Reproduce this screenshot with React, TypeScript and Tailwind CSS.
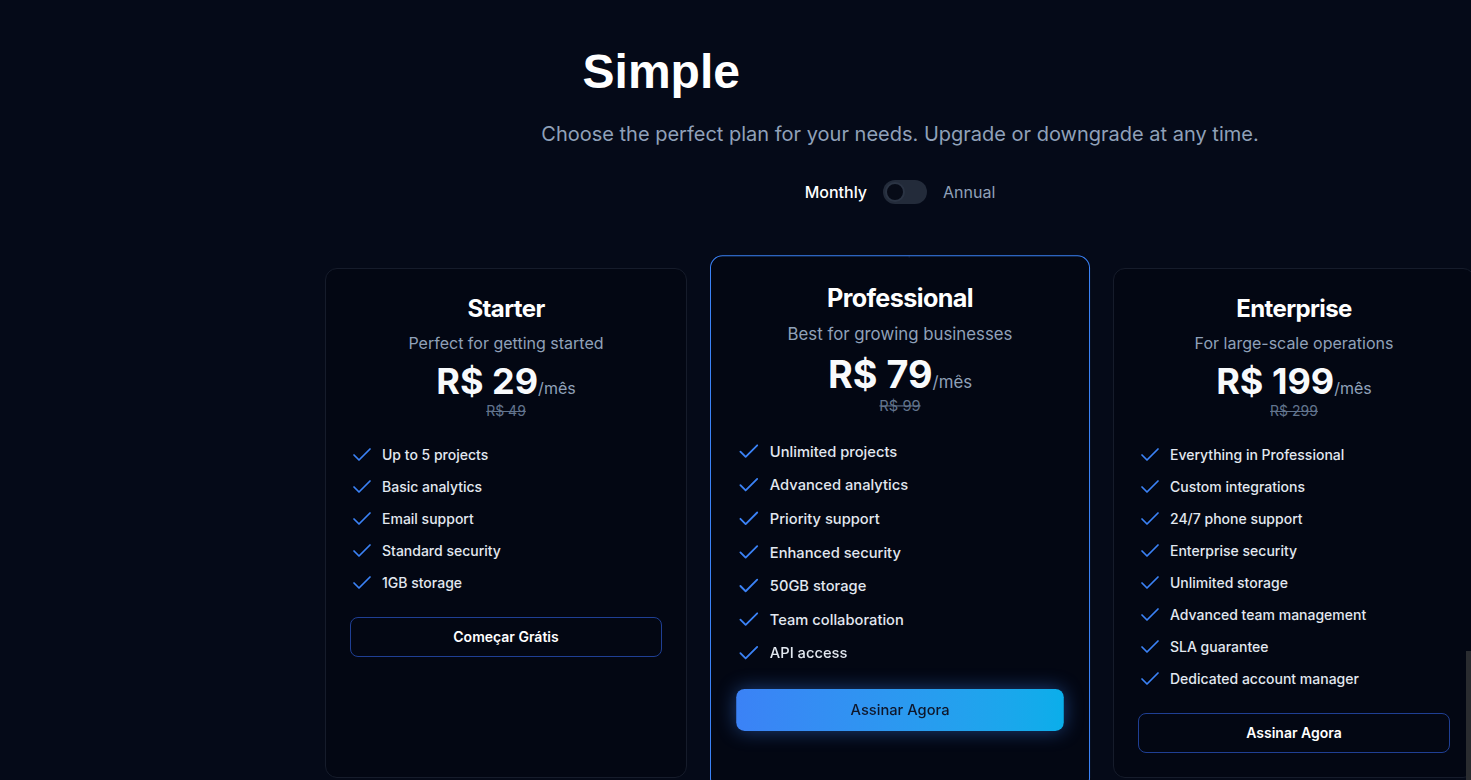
import React, { useState } from 'react';
import { Check } from 'lucide-react';

interface Plan {
  name: string;
  description: string;
  price: string;
  oldPrice: string;
  features: string[];
  cta: string;
  popular?: boolean;
}

const plans: Plan[] = [
  {
    name: 'Starter',
    description: 'Perfect for getting started',
    price: 'R$ 29',
    oldPrice: 'R$ 49',
    features: ['Up to 5 projects', 'Basic analytics', 'Email support', 'Standard security', '1GB storage'],
    cta: 'Começar Grátis'
  },
  {
    name: 'Professional',
    description: 'Best for growing businesses',
    price: 'R$ 79',
    oldPrice: 'R$ 99',
    features: [
      'Unlimited projects',
      'Advanced analytics',
      'Priority support',
      'Enhanced security',
      '50GB storage',
      'Team collaboration',
      'API access'
    ],
    cta: 'Assinar Agora',
    popular: true
  },
  {
    name: 'Enterprise',
    description: 'For large-scale operations',
    price: 'R$ 199',
    oldPrice: 'R$ 299',
    features: [
      'Everything in Professional',
      'Custom integrations',
      '24/7 phone support',
      'Enterprise security',
      'Unlimited storage',
      'Advanced team management',
      'SLA guarantee',
      'Dedicated account manager'
    ],
    cta: 'Assinar Agora'
  }
];

const PlanCard: React.FC<{ plan: Plan }> = ({ plan }) => {
  return (
    <div
      className={
        plan.popular
          ? 'relative z-10 flex scale-105 flex-col overflow-hidden rounded-xl border border-[#3b82f6] bg-[#030713] p-6'
          : 'relative flex flex-col rounded-xl border border-[#161c2b] bg-[#030713] p-6'
      }
    >
      {plan.popular && (
        <span className="absolute -top-3 left-1/2 h-[14px] -translate-x-1/2 whitespace-nowrap text-[11px] font-semibold leading-[14px] text-[#1b2f5c]">
          Mais Popular
        </span>
      )}

      <div className="text-center">
        <h3 className="mb-1.5 text-2xl font-bold tracking-tight text-white">{plan.name}</h3>
        <p className="mb-1.5 text-base text-slate-400">{plan.description}</p>
        <div className="flex items-baseline justify-center">
          <span className="text-4xl font-bold text-slate-50">{plan.price}</span>
          <span className="text-base text-slate-400">/mês</span>
        </div>
        <p className="text-sm text-slate-500 line-through">{plan.oldPrice}</p>
      </div>

      <ul className="mt-[22px] flex flex-col gap-2">
        {plan.features.map((feature) => (
          <li key={feature} className="flex items-center gap-2 text-sm font-medium text-slate-200">
            <Check className="h-6 w-6 shrink-0 text-[#3b82f6]" strokeWidth={1.75} />
            <span>{feature}</span>
          </li>
        ))}
      </ul>

      {plan.popular ? (
        <button className="mt-[22px] h-10 w-full rounded-lg bg-linear-to-r from-[#3b82f6] to-[#0aaeea] text-sm font-medium text-slate-900 shadow-[0_0_18px_rgba(59,130,246,0.45)]">
          {plan.cta}
        </button>
      ) : (
        <button className="mt-[22px] h-10 w-full rounded-lg border border-[#1f3f94] text-sm font-semibold text-white">
          {plan.cta}
        </button>
      )}
    </div>
  );
};

export default function App() {
  const [annual, setAnnual] = useState(false);

  return (
    <div className="relative h-[780px] w-full overflow-hidden bg-[#050a18] font-['Inter',sans-serif]">
      <div className="flex w-[1800px] flex-col items-center pt-12">
        <h1 className="mb-6 text-5xl leading-none font-bold font-['Liberation_Sans',Arial,sans-serif]">
          <span className="text-white">Simple</span>
          <span className="text-transparent">, Transparent Pricing</span>
        </h1>

        <p className="mb-8 text-xl text-slate-400">
          Choose the perfect plan for your needs. Upgrade or downgrade at any time.
        </p>

        <div className="flex items-center gap-4">
          <span className={annual ? 'text-base text-slate-400' : 'text-base font-medium text-white'}>Monthly</span>
          <button
            onClick={() => setAnnual(!annual)}
            className="flex h-6 w-11 items-center rounded-full bg-[#232b3a] px-0.5"
          >
            <span
              className={
                annual
                  ? 'h-5 w-5 translate-x-5 rounded-full border-2 border-[#2b3444] bg-[#070b17]'
                  : 'h-5 w-5 rounded-full border-2 border-[#2b3444] bg-[#070b17]'
              }
            />
          </button>
          <span className={annual ? 'text-base font-medium text-white' : 'text-base text-slate-400'}>Annual</span>
        </div>

        <div className="mt-16 grid w-[1150px] grid-cols-3 gap-8">
          {plans.map((plan) => (
            <PlanCard key={plan.name} plan={plan} />
          ))}
        </div>
      </div>

      {/* scrollbar sliver on the right edge */}
      <div className="absolute top-[651px] right-0 h-[129px] w-[5px] bg-[#2a2c30]" />
    </div>
  );
}
